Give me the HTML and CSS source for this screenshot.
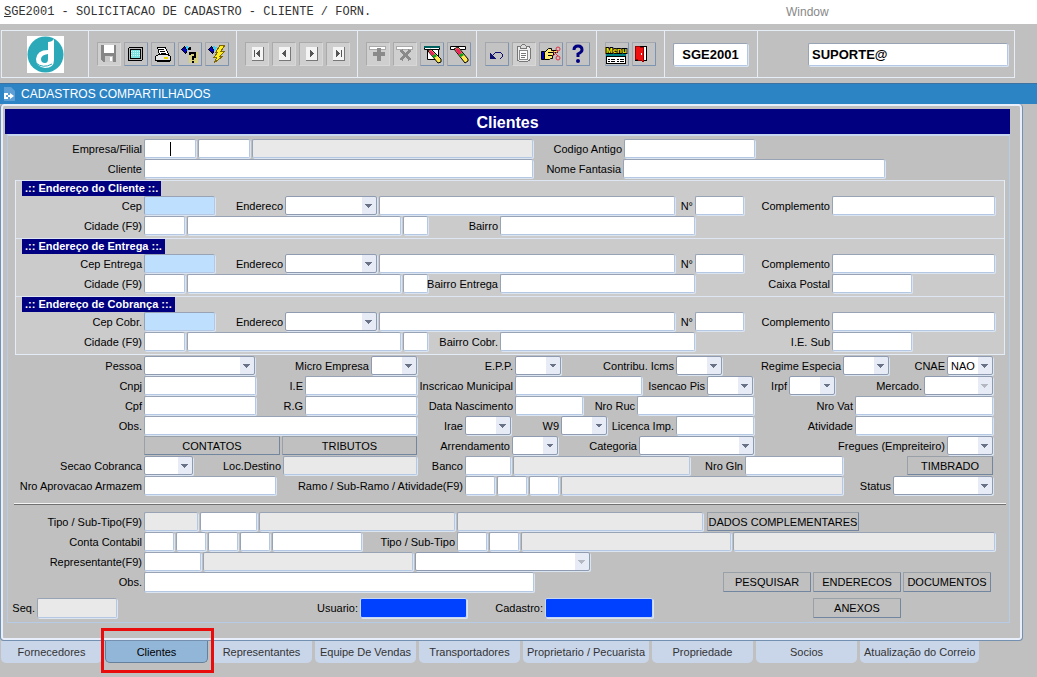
FILE: index.html
```
<!DOCTYPE html>
<html lang="pt-BR">
<head>
    <meta charset="UTF-8">
    <meta name="viewport" content="width=device-width, initial-scale=1.0">
    <title>SGE2001 - Clientes</title>
    <link rel="stylesheet" href="styles.css">
</head>
<body>
    <header class="menubar">
        <span class="menubar-title"><u>S</u>GE2001 - SOLICITACAO DE CADASTRO - CLIENTE / FORN.</span>
        <a class="menubar-link" href="#">Window</a>
    </header>

    <div class="toolbar">
        <div class="tools tools-logo">
            <svg class="logo" viewBox="0 0 37 37" role="img" aria-label="Logo">
                <rect width="37" height="37" fill="#fff"/>
                <circle cx="18.500" cy="18.500" r="18" fill="#2ba9b8"/>
                <path d="M21 6 Q25 6 27 3 V24 Q27 32 18 32 Q9 31 9 23 Q10 14 21 14 Z" fill="#fff"/>
                <path d="M21 18 Q14 19 14 23 Q14 27 18 27 Q21 27 21 23 Z" fill="#2ba9b8"/>
                <path d="M9 27 Q16 33 25 28" fill="none" stroke="#2ba9b8" stroke-width="1"/>
            </svg>
        </div>
        <div class="tools">
            <button class="tool off" aria-label="Salvar"><svg viewBox="0 0 24 24"><path fill="#868686" d="M4 3h15v17H6l-2-2z"/><path fill="#fff" d="M7 3h10v8H7z"/><path fill="#c8c8c8" d="M8 14h8v6H8z"/><path fill="#fff" d="M13 15h2v4h-2z"/></svg></button>
            <button class="tool" aria-label="Tela"><svg viewBox="0 0 24 24"><rect x="4" y="5" width="15" height="14" rx="2" fill="#000"/><rect x="5" y="6" width="13" height="12" fill="#b8b8b8"/><rect x="6" y="7" width="11" height="10" fill="#000"/><rect x="7" y="8" width="9" height="8" fill="#7fe0e0"/><path stroke="#c8ffff" stroke-dasharray="1 1" d="M7 9.500h9M7 11.500h9M7 13.500h9"/></svg></button>
            <button class="tool" aria-label="Imprimir"><svg viewBox="0 0 24 24"><path fill="#fff" stroke="#000" d="M6.500 5.500h8l3 7h-9z"/><path stroke="#000" d="M8 7.500h5M9 9.500h5M10 11.500h5"/><path fill="#e8e8e8" stroke="#000" d="M4.500 14.500l3-2h9l3 2v4h-15z"/><path stroke="#000" stroke-width="2" d="M6 19h13"/><path stroke="#e8d800" stroke-width="2" d="M13 16h4"/></svg></button>
            <button class="tool" aria-label="Entrar consulta"><svg viewBox="0 0 24 24"><path fill="#e8e040" d="M11 10h9v11h-9z" opacity=".5"/><path fill="#0000c0" stroke="#000" d="M3.500 7.500l3-3 3 4-2 3z"/><path fill="#40d0ff" d="M8 4l4 1-1 3-2 1z"/><path fill="#000" d="M11 5h2v3h-3z"/><path fill="none" stroke="#000" stroke-width="2" d="M12 13v-2h5v4h-2v3M14 20h2"/></svg></button>
            <button class="tool" aria-label="Executar consulta"><svg viewBox="0 0 24 24"><path fill="#0000c0" stroke="#000" d="M3.500 7.500l3-3 3 4-2 3z"/><path fill="#40d0ff" d="M8 4l4 1-1 3-2 1z"/><path fill="#ffee20" stroke="#806800" d="M15 3h5l-4 6h4l-5 5h3l-9 7 3-6h-3l4-5h-2z"/></svg></button>
        </div>
        <div class="tools">
            <button class="tool off" aria-label="Primeiro"><svg viewBox="0 0 24 24"><path class="key" d="M7 5h11v13H7z"/><path class="key-edge" d="M7 18.500h11.500V5"/><path fill="#555" d="M9 8h1v7H9zM15 8v7l-4-3.500z"/></svg></button>
            <button class="tool off" aria-label="Anterior"><svg viewBox="0 0 24 24"><path class="key" d="M7 5h11v13H7z"/><path class="key-edge" d="M7 18.500h11.500V5"/><path fill="#555" d="M14 8v7l-4-3.500z"/></svg></button>
            <button class="tool off" aria-label="Proximo"><svg viewBox="0 0 24 24"><path class="key" d="M7 5h11v13H7z"/><path class="key-edge" d="M7 18.500h11.500V5"/><path fill="#555" d="M11 8v7l4-3.500z"/></svg></button>
            <button class="tool off" aria-label="Ultimo"><svg viewBox="0 0 24 24"><path class="key" d="M7 5h11v13H7z"/><path class="key-edge" d="M7 18.500h11.500V5"/><path fill="#555" d="M10 8v7l4-3.500zM15 8h1v7h-1z"/></svg></button>
        </div>
        <div class="tools">
            <button class="tool off" aria-label="Inserir registro"><svg viewBox="0 0 24 24"><path fill="#fff" stroke="#aaa" d="M3.500 4.500h16v3h-16z"/><path fill="#8a8a8a" d="M11 6h4v4h4v4h-4v5h-4v-5H7v-4h4z"/></svg></button>
            <button class="tool off" aria-label="Remover registro"><svg viewBox="0 0 24 24"><path fill="#fff" stroke="#aaa" d="M3.500 4.500h16v3h-16z"/><path stroke="#8a8a8a" stroke-width="3" d="M8 8l9 10M17 8l-9 10"/></svg></button>
            <button class="tool" aria-label="Limpar tela"><svg class="smooth" viewBox="0 0 24 24"><path fill="#fff" stroke="#000" d="M7.500 6.500h11v11h-11z"/><path fill="#fff" stroke="#000" d="M4.500 4.500h15v3h-15z"/><path stroke="#006060" stroke-width="2" d="M4 5h16"/><path fill="#ffe850" stroke="#000" d="M8 9l3-2 10 10v3l-3 1z"/><path fill="#f02060" d="M9 9l2-1 4 4-3 2z"/><path fill="#10a020" d="M12 14l3-2 2 2-3 2z"/></svg></button>
            <button class="tool" aria-label="Limpar registro"><svg class="smooth" viewBox="0 0 24 24"><path fill="#fff" stroke="#000" d="M3.500 4.500h15v3h-15z"/><path fill="#ffe850" stroke="#000" d="M7 7l4-2 10 12v2l-3 2z"/><path fill="#f02060" d="M8 7l3-1 4 5-3 2z"/><path fill="#10a020" d="M12 13l3-2 2 2-3 2z"/></svg></button>
        </div>
        <div class="tools">
            <button class="tool" aria-label="Desfazer"><svg viewBox="0 0 24 24"><path fill="#101070" d="M5 10v7h6z"/><path fill="none" stroke="#101070" d="M8 13l3-3h4l2 2v3l-2 2"/></svg></button>
            <button class="tool off" aria-label="Editar"><svg viewBox="0 0 24 24"><rect x="5" y="4" width="13" height="15" rx="2" fill="#eee" stroke="#777"/><path fill="#ddd" stroke="#777" d="M8.500 6.500v-2l2-2h2l2 2v2z"/><path fill="#fff" stroke="#888" d="M7.500 8.500h8v9h-8z"/><path stroke="#777" d="M9 11.500h5M9 13.500h5M9 15.500h4"/></svg></button>
            <button class="tool" aria-label="Lista de valores"><svg class="smooth" viewBox="0 0 24 24"><path fill="#0000c0" stroke="#000" d="M2.500 9.500h3v8h-3z"/><path fill="#ffe870" stroke="#000" d="M5.500 10.500l4-4h3v2h6v2h-4v3h-1v3h-2l-1 1h-5z"/><path stroke="#000" d="M9 10.500h5M9 13.500h4"/><path fill="none" stroke="#e03040" d="M14 9l5 5M14 14l5-5"/><circle cx="19" cy="7" r="2" fill="none" stroke="#e03040"/><circle cx="19" cy="16" r="2" fill="none" stroke="#e03040"/></svg></button>
            <button class="tool" aria-label="Ajuda"><svg class="smooth" viewBox="0 0 24 24"><path fill="none" stroke="#000080" stroke-width="3" d="M8 8Q8 4 12 4Q16 4 16 8Q16 10 12 12V15"/><circle cx="12" cy="19" r="2" fill="#000080"/></svg></button>
        </div>
        <div class="tools">
            <button class="tool" aria-label="Menu"><svg viewBox="0 0 24 24"><text class="menu-text" x="1" y="11">Menu</text><path fill="#008080" d="M1 12h20v2H1z"/><path fill="#fff" stroke="#000" d="M1.500 14.500h19v7h-19z"/><path stroke="#000" stroke-dasharray="2 1 4 2" d="M3 17.500h16M3 19.500h16"/></svg></button>
            <button class="tool" aria-label="Sair"><svg viewBox="0 0 24 24"><path fill="#c0c0c0" stroke="#000" d="M3.500 4.500h11v14h-11z"/><path fill="#fff" d="M11 5h3v13h-3z"/><path fill="#f01010" stroke="#900" d="M3.500 4.500l8 1v14l-8-2z"/><path fill="#fff" d="M9 11h1v2H9z"/></svg></button>
        </div>
        <div class="tools tools-code"><input class="strong" type="text" value="SGE2001" aria-label="Programa"></div>
        <div class="tools tools-user"><input class="strong" type="text" value="SUPORTE@" aria-label="Usuario conectado"></div>
    </div>

    <div class="titlebar">
        <svg viewBox="0 0 12 14" aria-hidden="true"><path fill="#5d9fd4" d="M1 0h7l4 4v10H1z"/><path fill="none" stroke="#fff" stroke-width="2" d="M5 7H2v4h3"/><path fill="#fff" d="M7 6l4 3-4 3zM5 8h2v2H5z"/></svg>
        <span>CADASTROS COMPARTILHADOS</span>
    </div>

    <main class="panel">
        <h1>Clientes</h1>
        <form class="form" onsubmit="return false;">
            <div class="row row-empresa">
                <label for="empresa">Empresa/Filial</label>
                <input class="current" id="empresa" type="text">
                <input type="text" aria-label="Filial">
                <input type="text" aria-label="Nome da empresa" disabled>
                <label for="codigo">Codigo Antigo</label>
                <input id="codigo" type="text">
            </div>
            <div class="row row-cliente">
                <label for="cliente">Cliente</label>
                <input id="cliente" type="text">
                <label for="fantasia">Nome Fantasia</label>
                <input id="fantasia" type="text">
            </div>

            <div class="boxes">
                <section class="box">
                    <h2>.:: Endereço do Cliente ::.</h2>
                    <div class="row row-endereco">
                        <label for="cep1">Cep</label>
                        <input class="blue" id="cep1" type="text">
                        <label for="end1">Endereco</label>
                        <select id="end1"><option></option></select>
                        <input type="text" aria-label="Logradouro">
                        <label for="num1">N°</label>
                        <input id="num1" type="text">
                        <label for="comp1">Complemento</label>
                        <input id="comp1" type="text">
                    </div>
                    <div class="row row-cidade">
                        <label for="cid1">Cidade (F9)</label>
                        <input id="cid1" type="text">
                        <input type="text" aria-label="Nome da cidade">
                        <input type="text" aria-label="UF">
                        <label for="bairro1">Bairro</label>
                        <input id="bairro1" type="text">
                    </div>
                </section>
                <section class="box">
                    <h2>.:: Endereço de Entrega ::.</h2>
                    <div class="row row-endereco">
                        <label for="cep2">Cep Entrega</label>
                        <input class="blue" id="cep2" type="text">
                        <label for="end2">Endereco</label>
                        <select id="end2"><option></option></select>
                        <input type="text" aria-label="Logradouro">
                        <label for="num2">N°</label>
                        <input id="num2" type="text">
                        <label for="comp2">Complemento</label>
                        <input id="comp2" type="text">
                    </div>
                    <div class="row row-cidade">
                        <label for="cid2">Cidade (F9)</label>
                        <input id="cid2" type="text">
                        <input type="text" aria-label="Nome da cidade">
                        <input type="text" aria-label="UF">
                        <label for="bairro2">Bairro Entrega</label>
                        <input id="bairro2" type="text">
                        <label for="caixa">Caixa Postal</label>
                        <input id="caixa" type="text">
                    </div>
                </section>
                <section class="box">
                    <h2>.:: Endereço de Cobrança ::.</h2>
                    <div class="row row-endereco">
                        <label for="cep3">Cep Cobr.</label>
                        <input class="blue" id="cep3" type="text">
                        <label for="end3">Endereco</label>
                        <select id="end3"><option></option></select>
                        <input type="text" aria-label="Logradouro">
                        <label for="num3">N°</label>
                        <input id="num3" type="text">
                        <label for="comp3">Complemento</label>
                        <input id="comp3" type="text">
                    </div>
                    <div class="row row-cidade">
                        <label for="cid3">Cidade (F9)</label>
                        <input id="cid3" type="text">
                        <input type="text" aria-label="Nome da cidade">
                        <input type="text" aria-label="UF">
                        <label for="bairro3">Bairro Cobr.</label>
                        <input id="bairro3" type="text">
                        <label for="iesub">I.E. Sub</label>
                        <input id="iesub" type="text">
                    </div>
                </section>
            </div>

            <div class="row row-pessoa">
                <label for="pessoa">Pessoa</label>
                <select id="pessoa"><option></option></select>
                <label for="micro">Micro Empresa</label>
                <select id="micro"><option></option></select>
                <label for="epp">E.P.P.</label>
                <select id="epp"><option></option></select>
                <label for="icms">Contribu. Icms</label>
                <select id="icms"><option></option></select>
                <label for="regime">Regime Especia</label>
                <select id="regime"><option></option></select>
                <label for="cnae">CNAE</label>
                <select id="cnae"><option>NAO</option></select>
            </div>
            <div class="row row-cnpj">
                <label for="cnpj">Cnpj</label>
                <input id="cnpj" type="text">
                <label for="ie">I.E</label>
                <input id="ie" type="text">
                <label for="inscricao">Inscricao Municipal</label>
                <input id="inscricao" type="text">
                <label for="pis">Isencao Pis</label>
                <select id="pis"><option></option></select>
                <label for="irpf">Irpf</label>
                <select id="irpf"><option></option></select>
                <label for="mercado">Mercado.</label>
                <select id="mercado" disabled><option></option></select>
            </div>
            <div class="row row-cpf">
                <label for="cpf">Cpf</label>
                <input id="cpf" type="text">
                <label for="rg">R.G</label>
                <input id="rg" type="text">
                <label for="nascimento">Data Nascimento</label>
                <input id="nascimento" type="text">
                <label for="ruc">Nro Ruc</label>
                <input id="ruc" type="text">
                <label for="vat">Nro Vat</label>
                <input id="vat" type="text">
            </div>
            <div class="row row-obs">
                <label for="obs">Obs.</label>
                <input id="obs" type="text">
                <label for="irae">Irae</label>
                <select id="irae"><option></option></select>
                <label for="w9">W9</label>
                <select id="w9"><option></option></select>
                <label for="licenca">Licenca Imp.</label>
                <input id="licenca" type="text">
                <label for="atividade">Atividade</label>
                <input id="atividade" type="text">
            </div>
            <div class="row row-contatos">
                <span></span>
                <button class="btn" type="button">CONTATOS</button>
                <button class="btn" type="button">TRIBUTOS</button>
                <label for="arrendamento">Arrendamento</label>
                <select id="arrendamento"><option></option></select>
                <label for="categoria">Categoria</label>
                <select id="categoria"><option></option></select>
                <label for="fregues">Fregues (Empreiteiro)</label>
                <select id="fregues"><option></option></select>
            </div>
            <div class="row row-secao">
                <label for="secao">Secao Cobranca</label>
                <select id="secao"><option></option></select>
                <label for="destino">Loc.Destino</label>
                <input id="destino" type="text" disabled>
                <label for="banco">Banco</label>
                <input id="banco" type="text">
                <input type="text" aria-label="Nome do banco" disabled>
                <label for="gln">Nro Gln</label>
                <input id="gln" type="text">
                <button class="btn to-end" type="button">TIMBRADO</button>
            </div>
            <div class="row row-armazem">
                <label for="armazem">Nro Aprovacao Armazem</label>
                <input id="armazem" type="text">
                <label for="ramo">Ramo / Sub-Ramo / Atividade(F9)</label>
                <input id="ramo" type="text">
                <input type="text" aria-label="Sub-Ramo">
                <input type="text" aria-label="Atividade do ramo">
                <input type="text" aria-label="Descricao do ramo" disabled>
                <label for="status">Status</label>
                <select id="status"><option></option></select>
            </div>

            <hr>

            <div class="row row-tipo">
                <label for="tipo">Tipo / Sub-Tipo(F9)</label>
                <input id="tipo" type="text" disabled>
                <input type="text" aria-label="Sub-Tipo">
                <input type="text" aria-label="Descricao do tipo" disabled>
                <input type="text" aria-label="Descricao do sub-tipo" disabled>
                <button class="btn" type="button">DADOS COMPLEMENTARES</button>
            </div>
            <div class="row row-conta">
                <label for="conta">Conta Contabil</label>
                <input id="conta" type="text">
                <input type="text" aria-label="Conta nivel 2">
                <input type="text" aria-label="Conta nivel 3">
                <input type="text" aria-label="Conta nivel 4">
                <input type="text" aria-label="Conta nivel 5">
                <label for="contatipo">Tipo / Sub-Tipo</label>
                <input id="contatipo" type="text">
                <input type="text" aria-label="Sub-Tipo da conta">
                <input type="text" aria-label="Descricao do tipo da conta" disabled>
                <input type="text" aria-label="Descricao do sub-tipo da conta" disabled>
            </div>
            <div class="row row-repres">
                <label for="repres">Representante(F9)</label>
                <input id="repres" type="text">
                <input type="text" aria-label="Nome do representante" disabled>
                <select aria-label="Tipo do representante" disabled><option></option></select>
            </div>
            <div class="row row-acoes">
                <label for="obs2">Obs.</label>
                <input id="obs2" type="text">
                <span></span>
                <button class="btn" type="button">PESQUISAR</button>
                <button class="btn" type="button">ENDERECOS</button>
                <button class="btn" type="button">DOCUMENTOS</button>
            </div>
            <div class="row row-seq">
                <label for="seq">Seq.</label>
                <input id="seq" type="text" disabled>
                <label for="usuario">Usuario:</label>
                <input class="royal" id="usuario" type="text" readonly>
                <label for="cadastro">Cadastro:</label>
                <input class="royal" id="cadastro" type="text" readonly>
                <button class="btn to-end" type="button">ANEXOS</button>
            </div>
        </form>
    </main>

    <nav class="tabs">
        <button class="tab">Fornecedores</button>
        <button class="tab active">Clientes</button>
        <button class="tab">Representantes</button>
        <button class="tab">Equipe De Vendas</button>
        <button class="tab">Transportadores</button>
        <button class="tab">Proprietario / Pecuarista</button>
        <button class="tab">Propriedade</button>
        <button class="tab">Socios</button>
        <button class="tab">Atualização do Correio</button>
    </nav>
</body>
</html>
```
FILE: styles.css
```
* {
    box-sizing: border-box;
}

body {
    min-height: 100vh;
    margin: 0;
    background-color: #c0c0c0;
    color: #000;
    font-family: "Liberation Sans", Arial, sans-serif;
    font-size: 11px;
}

input,
select,
button {
    margin: 0;
    font: inherit;
    color: inherit;
}

/* Menu */
.menubar {
    display: grid;
    grid-template-columns: minmax(0, 1fr) 251px;
    align-items: center;
    height: 24px;
    padding-left: 4px;
    background-color: #fff;
}

.menubar-title {
    font-family: "Liberation Mono", "Courier New", monospace;
    font-size: 12px;
    color: #333;
}

.menubar-link {
    font-size: 12px;
    color: #888;
    text-decoration: none;
}

/* Toolbar */
.toolbar {
    display: grid;
    grid-template-columns: 87px 148px 121px 119px 120px 68px 93px minmax(0, 1fr);
    height: 48px;
    margin: 6px 22px 5px 1px;
    border: 1px solid #e6edf6;
}

.tools {
    display: flex;
    align-items: center;
    gap: 3px;
    padding-left: 8px;
    border-right: 1px solid #e6edf6;
}

.tools:last-child {
    border-right: none;
}

.tools-logo {
    justify-content: center;
    padding-left: 0;
}

.logo {
    width: 37px;
    height: 37px;
}

.tools-code {
    padding: 0 8px;
}

.tools-user {
    justify-content: flex-end;
    padding: 0 6px;
}

.tool {
    width: 24px;
    height: 24px;
    padding: 0;
    border: 1px solid;
    border-color: #a4a8ae #7d93b2 #7d93b2 #a4a8ae;
    border-radius: 1px;
    background-color: #c3c3c3;
}

.tool.off {
    border-color: #aaa #d8d8d8 #d8d8d8 #aaa;
    background-color: #cfcfcf;
}

.tool svg {
    display: block;
    width: 24px;
    height: 24px;
    margin: -1px;
    fill: none;
    shape-rendering: crispEdges;
}

.tool svg.smooth {
    shape-rendering: auto;
}

.tool .key {
    fill: #f4f4f4;
}

.tool .key-edge {
    stroke: #777;
}

.menu-text {
    fill: #ffee00;
    stroke: #000;
    stroke-width: 2px;
    paint-order: stroke;
    font-size: 8px;
    font-weight: bold;
}

.strong {
    height: 23px;
    font-size: 13px;
    font-weight: bold;
}

.tools-code .strong {
    width: 75px;
    text-align: center;
}

.tools-user .strong {
    width: 200px;
    padding-left: 3px;
}

/* Window title */
.titlebar {
    display: flex;
    align-items: center;
    gap: 6px;
    height: 21px;
    padding-left: 3px;
    border-top: 1px solid #3f72a0;
    background-color: #2d84c4;
    color: #fff;
    font-size: 12px;
}

.titlebar svg {
    width: 12px;
    height: 14px;
}

.panel {
    margin-right: 14px;
    padding: 5px 12px 17px 4px;
    border: 1px solid #7390b0;
    border-top: none;
    border-radius: 4px;
    box-shadow: inset 0 0 0 2px #e8effa;
}

h1 {
    height: 25px;
    margin: 0;
    background-color: #000080;
    color: #fff;
    font-size: 16px;
    line-height: 27px;
    text-align: center;
}

/* Form */
.form {
    display: flex;
    flex-direction: column;
    gap: 1px;
    margin-left: 2px;
    padding: 3px 3px 4px 6px;
    border: 1px solid #b6cce6;
    border-top: 2px solid #c6d6ee;
}

.row {
    display: grid;
    column-gap: 2px;
    height: 19px;
}

label {
    display: flex;
    justify-content: flex-end;
    align-items: center;
    min-width: 0;
    white-space: nowrap;
}

input,
select {
    min-width: 0;
    padding: 0 4px;
    border: 1px solid;
    border-color: #98a3b6 #b4c8e4 #b4c8e4 #98a3b6;
    border-radius: 2px;
    background-color: #fff;
    box-shadow: 1px 1px 0 #dbe5f2;
    outline: none;
}

input:disabled {
    background-color: #e9e9e9;
}

/* Field that holds the cursor */
.current {
    background-image: linear-gradient(#000, #000);
    background-position: center;
    background-size: 1px 14px;
    background-repeat: no-repeat;
    text-align: center;
}

.blue {
    background-color: #bfdfff;
}

.royal {
    border-color: #c6d8f4;
    background-color: #0040ff;
}

/* Arrow drawn with two triangles over the light square */
select {
    --arrow: #6a7288;
    appearance: none;
    border-color: #8f9bb0;
    padding: 0 3px;
    background-image:
        linear-gradient(to bottom left, var(--arrow) 50%, transparent 50%),
        linear-gradient(to bottom right, var(--arrow) 50%, transparent 50%),
        linear-gradient(#e6ebf5, #e6ebf5);
    background-position: right 7px center, right 3px center, right top;
    background-size: 4px 4px, 4px 4px, 14px 100%;
    background-repeat: no-repeat;
}

select:disabled {
    --arrow: #b4b8c0;
    opacity: 1;
}

.btn {
    min-width: 0;
    padding: 0;
    border: 1px solid;
    border-color: #9aa0a8 #72869f #72869f #9aa0a8;
    border-radius: 1px;
    background-color: #c0c0c0;
    white-space: nowrap;
}

.to-end {
    grid-column: -3 / -2;
}

/* Address boxes */
.boxes {
    margin: 1px 1px 0;
    border: 1px solid #e4ecf7;
    border-top: none;
    background-color: #cbcbcb;
}

.box {
    display: flex;
    flex-direction: column;
    align-items: stretch;
    padding-bottom: 3px;
    border-top: 1px solid #dde6f2;
}

.box h2 {
    align-self: flex-start;
    height: 15px;
    margin: 0 0 0 6px;
    padding: 0 3px;
    background-color: #000080;
    color: #fff;
    font-size: 11px;
    line-height: 15px;
}

.box .row + .row {
    margin-top: 1px;
}

hr {
    width: 100%;
    height: 2px;
    margin: 7px 0 6px;
    border: none;
    border-top: 1px solid #f4f4f4;
    border-bottom: 1px solid #707070;
}

/* Column widths of each row; the 1fr field takes the spare width */
.row-empresa {
    grid-template-columns: 128px 52px 52px minmax(0, 1fr) 87px 131px 249px;
}

.row-cliente {
    grid-template-columns: 128px minmax(0, 1fr) 86px 262px 119px;
}

.row-endereco {
    grid-template-columns: 126px 71px 66px 92px minmax(0, 1fr) 16px 49px 84px 163px 7px;
}

.row-cidade {
    grid-template-columns: 126px 41px minmax(0, 1fr) 25px 68px 195px 133px 80px 90px;
}

.row-pessoa {
    grid-template-columns: 128px minmax(0, 1fr) 112px 46px 94px 46px 111px 46px 117px 46px 54px 46px 11px;
}

.row-cnpj {
    grid-template-columns: 128px minmax(0, 1fr) 45px 112px 94px 127px 61px 46px 32px 46px 85px 69px 11px;
}

.row-cpf {
    grid-template-columns: 128px minmax(0, 1fr) 45px 112px 94px 68px 50px 117px 97px 138px 11px;
}

.row-obs {
    grid-template-columns: 128px minmax(0, 1fr) 44px 46px 46px 46px 65px 78px 97px 138px 11px;
}

.row-contatos {
    grid-template-columns: 128px minmax(0, 1fr) 135px 91px 46px 77px 115px 189px 46px 11px;
}

.row-secao {
    grid-template-columns: 128px 49px 86px minmax(0, 1fr) 44px 46px 177px 51px 98px 60px 86px 11px;
}

.row-armazem {
    grid-template-columns: 128px minmax(0, 1fr) 185px 30px 30px 30px 282px 46px 100px 11px;
}

.row-tipo {
    grid-template-columns: 128px 54px 57px 196px minmax(0, 1fr) 154px 145px;
}

.row-tipo .btn {
    margin-left: 2px;
}

.row-conta {
    grid-template-columns: 128px 30px 30px 30px 30px 90px 91px 30px 30px 210px minmax(0, 1fr) 9px;
}

.row-repres {
    grid-template-columns: 128px 57px minmax(0, 1fr) 175px 414px;
}

.row-acoes {
    grid-template-columns: 128px minmax(0, 1fr) 185px 88px 88px 88px 13px;
}

.row-seq {
    grid-template-columns: 21px 80px 239px 107px 74px 108px minmax(0, 1fr) 88px 103px;
    margin-top: 5px;
}

/* The rows with the action buttons are a little taller */
.row-acoes,
.row-seq {
    height: 20px;
}

/* Bottom tabs */
.tabs {
    display: flex;
    gap: 3px;
    padding: 0 0 14px 1px;
}

.tab {
    position: relative;
    min-width: 101px;
    height: 22px;
    padding: 0 4px;
    border: none;
    border-radius: 0 0 5px 5px;
    background-color: #c9d6ea;
    color: #333;
    white-space: nowrap;
}

.tab.active {
    z-index: 1;
    min-width: 103px;
    border: 1px solid #66809c;
    border-top: none;
    background-color: #92b6d8;
    color: #000;
}

/* Red frame round the current tab */
.tab.active::after {
    content: "";
    position: absolute;
    inset: -13px -7px -11px -5px;
    border: 3px solid #e80c0c;
}
```
